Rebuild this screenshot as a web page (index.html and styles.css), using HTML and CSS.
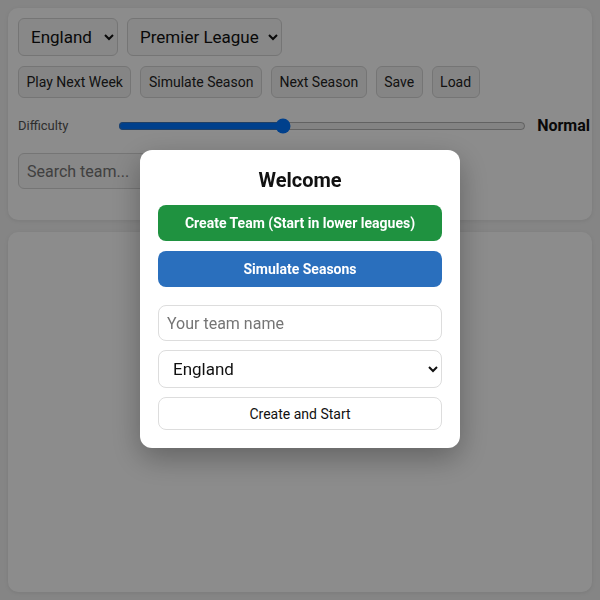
FILE: index.html
```html
<!DOCTYPE html>
<html lang="en">
<head>
    <meta charset="UTF-8">
    <meta name="viewport" content="width=device-width, initial-scale=1.0">
    <title>Football Manager</title>
    <link rel="stylesheet" href="styles.css">
</head>
<body>
    <div class="panel controls">
        <div class="row">
            <select class="pick pick-country">
                <option>England</option>
            </select>
            <select class="pick">
                <option>Premier League</option>
            </select>
        </div>
        <div class="row">
            <button class="btn">Play Next Week</button>
            <button class="btn">Simulate Season</button>
            <button class="btn">Next Season</button>
            <button class="btn">Save</button>
            <button class="btn">Load</button>
        </div>
        <div class="difficulty">
            <span class="diff-label">Difficulty</span>
            <input type="range" class="diff-range" min="0" max="100" value="40">
            <span class="diff-value">Normal</span>
        </div>
        <input type="text" class="search" placeholder="Search team...">
    </div>

    <div class="panel table-area"></div>

    <div class="overlay">
        <div class="modal">
            <h2>Welcome</h2>
            <button class="wide green">Create Team (Start in lower leagues)</button>
            <button class="wide blue">Simulate Seasons</button>
            <div class="create-form">
                <input type="text" class="field" placeholder="Your team name">
                <select class="field field-select">
                    <option>England</option>
                </select>
                <button class="start">Create and Start</button>
            </div>
        </div>
    </div>
</body>
</html>
```

FILE: styles.css
```css
/* base */
* {
    box-sizing: border-box;
}

body {
    font-family: Roboto, 'Liberation Sans', sans-serif;
    background-color: #f2f2f2;
    color: #111;
    margin: 0;
    padding: 8px;
    height: 600px;
    display: flex;
    flex-direction: column;
    gap: 12px;
}

.panel {
    background-color: #fff;
    border-radius: 10px;
    box-shadow: 0 1px 4px rgba(0, 0, 0, 0.08);
}

.controls {
    padding: 10px 10px 31px;
    display: flex;
    flex-direction: column;
    gap: 10px;
}

.table-area {
    flex: 1;
}

.row {
    display: flex;
    gap: 9px;
}

.pick {
    height: 38px;
    font-family: inherit;
    font-size: 17px;
    color: #111;
    background-color: #f7f7f7;
    border: 1px solid #d6d6d6;
    border-radius: 6px;
    padding: 0 6px 0 8px;
}

.pick-country {
    width: 100px;
}

.btn {
    height: 32px;
    font-family: inherit;
    font-size: 14px;
    color: #222;
    background-color: #f3f3f3;
    border: 1px solid #d6d6d6;
    border-radius: 6px;
    padding: 0 7.5px;
}

.difficulty {
    display: flex;
    align-items: center;
    height: 35px;
}

.diff-label {
    width: 100px;
    font-size: 13px;
    color: #555;
}

.diff-range {
    flex: 1;
    margin: 0 11px 0 0;
    height: 20px;
}

.diff-value {
    font-weight: bold;
    font-size: 16px;
    margin-right: -8px;
}

.search {
    width: 300px;
    height: 36px;
    font-family: inherit;
    font-size: 16px;
    border: 1px solid #d6d6d6;
    border-radius: 6px;
    padding: 0 8px;
    background-color: #f7f7f7;
}

/* modal */
.overlay {
    position: fixed;
    inset: 0;
    background-color: rgba(0, 0, 0, 0.45);
    display: flex;
    align-items: center;
    justify-content: center;
}

.modal {
    width: 320px;
    background-color: #fff;
    border-radius: 12px;
    padding: 18px 18px 18px;
    margin-top: -2px;
    box-shadow: 0 10px 30px rgba(0, 0, 0, 0.3);
    display: flex;
    flex-direction: column;
}

.modal h2 {
    margin: 0 0 13px;
    font-size: 20px;
    text-align: center;
}

.wide {
    height: 36px;
    border: none;
    border-radius: 8px;
    color: #fff;
    font-family: inherit;
    font-size: 14px;
    font-weight: bold;
    margin-bottom: 10px;
}

.green {
    background-color: #1f9240;
}

.blue {
    background-color: #2a6fbd;
}

.create-form {
    margin-top: 8px;
    display: flex;
    flex-direction: column;
    gap: 9px;
}

.field {
    height: 36px;
    font-family: inherit;
    font-size: 16px;
    border: 1px solid #ddd;
    border-radius: 8px;
    padding: 0 8px;
    background-color: #fff;
    color: #111;
}

.field-select {
    height: 38px;
    font-size: 17px;
    padding: 0 6px 0 10px;
}

.start {
    height: 33px;
    font-family: inherit;
    font-size: 14px;
    color: #111;
    background-color: #fff;
    border: 1px solid #ddd;
    border-radius: 8px;
}
```
